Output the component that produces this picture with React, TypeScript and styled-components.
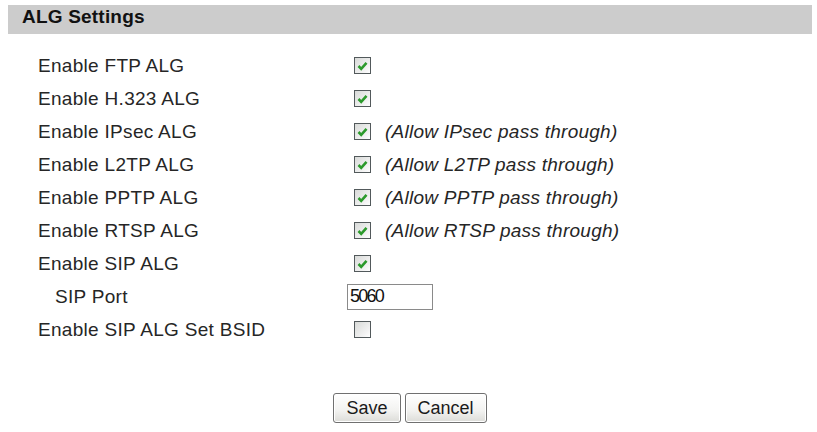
import React from "react";
import styled, { createGlobalStyle } from "styled-components";

const Global = createGlobalStyle`
  html, body { margin: 0; padding: 0; background: #ffffff; }
  body { padding: 5px 5px 0 8px; font-family: "Liberation Sans", Arial, sans-serif; color: #262626; }
`;

const Header = styled.div`
  height: 29px;
  background: #cccccc;
  padding-left: 14px;
  font-size: 19px;
  font-weight: bold;
  line-height: 24px;
  color: #111;
  letter-spacing: 0.2px;
`;

const Form = styled.div`
  margin-top: 15px;
  padding-left: 30px;
  display: grid;
  grid-template-columns: 309px auto;
  grid-auto-rows: 33px;
  align-items: center;
`;

const Label = styled.div<{ $indent?: boolean }>`
  font-size: 19px;
  letter-spacing: 0.3px;
  padding-left: ${(p) => (p.$indent ? "17px" : "0")};
  white-space: nowrap;
`;

const Cell = styled.div`
  display: flex;
  align-items: center;
`;

const Box = styled.span`
  width: 15px;
  height: 15px;
  margin-left: 7px;
  border: 1px solid #52595b;
  background: linear-gradient(135deg, #d8dad8 0%, #f2f2f2 70%, #ffffff 100%);
  display: inline-flex;
  align-items: center;
  justify-content: center;
`;

const Note = styled.span`
  margin-left: 14px;
  font-size: 19px;
  letter-spacing: 0.25px;
  font-style: italic;
  white-space: nowrap;
`;

const Input = styled.input`
  box-sizing: border-box;
  width: 86px;
  height: 26px;
  border: 1px solid #8a8a8a;
  padding: 1px 2px;
  font-family: "Liberation Sans", sans-serif;
  font-size: 18px;
  letter-spacing: -1.8px;
  color: #111;
  outline: none;
`;

const Buttons = styled.div`
  margin-top: 47px;
  display: flex;
  justify-content: center;
  gap: 4px;
`;

const Button = styled.button`
  height: 30px;
  padding: 0 12px;
  font-family: "Liberation Sans", Arial, sans-serif;
  font-size: 18px;
  color: #1a1a1a;
  border: 1px solid #707070;
  border-radius: 3px;
  background: linear-gradient(#ffffff 0%, #f2f2f0 60%, #dcdcd8 100%);
  box-shadow: inset 0 0 0 1px #ffffff;
`;

const Check: React.FC<{ on: boolean }> = ({ on }) => (
  <Box>
    {on && (
      <svg width="11" height="10" viewBox="0 0 11 10">
        <path d="M1.5 5 L4.2 7.8 L9.5 1.8" fill="none" stroke="#2c9a2c" strokeWidth="2.6" />
      </svg>
    )}
  </Box>
);

const rows: { label: string; on: boolean; note?: string }[] = [
  { label: "Enable FTP ALG", on: true },
  { label: "Enable H.323 ALG", on: true },
  { label: "Enable IPsec ALG", on: true, note: "(Allow IPsec pass through)" },
  { label: "Enable L2TP ALG", on: true, note: "(Allow L2TP pass through)" },
  { label: "Enable PPTP ALG", on: true, note: "(Allow PPTP pass through)" },
  { label: "Enable RTSP ALG", on: true, note: "(Allow RTSP pass through)" },
  { label: "Enable SIP ALG", on: true },
];

export default function App() {
  return (
    <>
      <Global />
      <Header>ALG Settings</Header>
      <Form>
        {rows.map((r) => (
          <React.Fragment key={r.label}>
            <Label>{r.label}</Label>
            <Cell>
              <Check on={r.on} />
              {r.note && <Note>{r.note}</Note>}
            </Cell>
          </React.Fragment>
        ))}
        <Label $indent>SIP Port</Label>
        <Cell>
          <Input defaultValue="5060" />
        </Cell>
        <Label>Enable SIP ALG Set BSID</Label>
        <Cell>
          <Check on={false} />
        </Cell>
      </Form>
      <Buttons>
        <Button>Save</Button>
        <Button>Cancel</Button>
      </Buttons>
    </>
  );
}
